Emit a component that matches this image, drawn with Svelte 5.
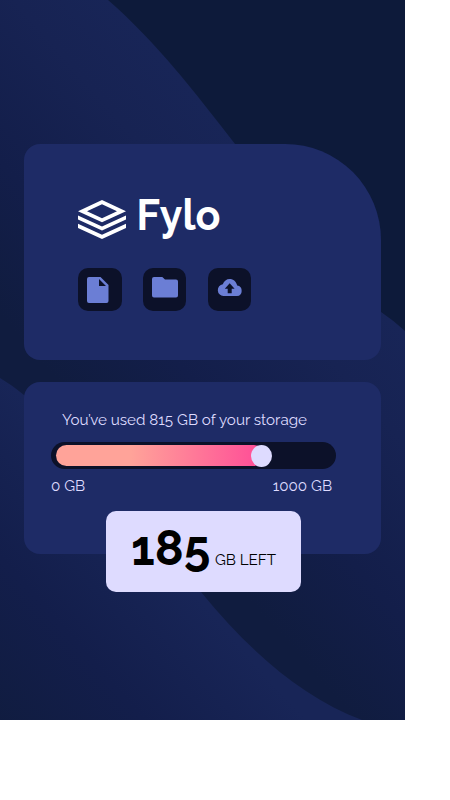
<script>
  const used = 815;
  const total = 1000;
  const left = total - used;
</script>

<main>
  <svg class="backdrop" viewBox="0 0 405 720" preserveAspectRatio="none" aria-hidden="true">
    <defs>
      <linearGradient id="upper" gradientUnits="userSpaceOnUse" x1="242" y1="148" x2="22" y2="341">
        <stop offset="0" stop-color="#182557" />
        <stop offset="0.25" stop-color="#172353" />
        <stop offset="0.65" stop-color="#131e4a" />
        <stop offset="1" stop-color="#101c3f" />
      </linearGradient>
      <linearGradient id="lower" gradientUnits="userSpaceOnUse" x1="205" y1="605" x2="22" y2="766">
        <stop offset="0" stop-color="#182557" />
        <stop offset="0.5" stop-color="#131e4b" />
        <stop offset="1" stop-color="#101c3f" />
      </linearGradient>
    </defs>
    <path fill="url(#upper)" d="M0 0H108C157 43 194 91 235 144C285 208 332 276 381 312Q393 320 405 331V720H0Z" />
    <path fill="url(#lower)" d="M0 378Q12 385 24 395C90 443 147 527 201 592C250 652 303 698 362 720H0Z" />
  </svg>

  <section class="card brand">
    <svg class="logo" viewBox="0 0 146 48" role="img" aria-label="Fylo">
      <g fill="#fff">
        <path fill-rule="evenodd" d="M24 4L48 15.2 24 26.3 0 15.2ZM24 8.2L9 15.2 24 22.3 39 15.2Z" />
        <path d="M0 19.5L24 30.4 48 19.5V23.6L24 34.6 0 23.6Z" />
        <path d="M0 27.8L24 38.8 48 27.8V32L24 43 0 32Z" />
        <text x="58.4" y="34.4" textLength="84" lengthAdjust="spacingAndGlyphs">Fylo</text>
      </g>
    </svg>
    <div class="tiles">
      <div class="tile">
        <svg viewBox="0 0 44 43"><path fill-rule="evenodd" d="M11 9H22.5L30.5 17V33Q30.5 35 28.5 35H11Q9 35 9 33V11Q9 9 11 9ZM21 11V18H28Z" /></svg>
      </div>
      <div class="tile">
        <svg viewBox="0 0 44 43"><path d="M11 9H19.3L22 11.5H33Q35 11.5 35 13.5V27.5Q35 29.5 33 29.5H11Q9 29.5 9 27.5V11Q9 9 11 9Z" /></svg>
      </div>
      <div class="tile">
        <svg viewBox="0 0 44 43"><path fill-rule="evenodd" d="M15.4 28.1A6 6 0 0 1 14.8 16.2C16.1 13 18.5 11 21.6 11C25.4 11 28.3 13.7 29.2 17.6A5.3 5.3 0 0 1 29 28.1ZM21.7 15.3L16.8 20.7H19.7V25.3H23.7V20.7H26.6Z" /></svg>
      </div>
    </div>
  </section>

  <section class="card storage">
    <p class="usage">You’ve used {used} GB of your storage</p>
    <div class="track">
      <div class="fill"></div>
      <div class="knob"></div>
    </div>
    <div class="scale">
      <span>0 GB</span>
      <span>{total} GB</span>
    </div>
    <div class="remaining">
      <strong>{left}</strong><span class="unit">GB LEFT</span>
    </div>
  </section>
</main>

<style>
  :global(body) { background: #fff; }
  main {
    position: relative;
    box-sizing: border-box;
    width: 405px;
    height: 720px;
    padding: 144px 24px 0;
    display: flex;
    flex-direction: column;
    gap: 22px;
    background: #0d1a3a;
    font-family: Raleway, Lato, sans-serif;
    color: #dedbff;
    overflow: hidden;
  }
  .backdrop { position: absolute; inset: 0; width: 405px; height: 720px; }
  .card {
    position: relative;
    box-sizing: border-box;
    background: #1e2b66;
    border-radius: 16px;
  }
  .brand { height: 216px; padding: 52px 54px 0; border-top-right-radius: 96px; }
  .logo { display: block; width: 146px; height: 48px; overflow: visible; }
  .logo text { font: 700 43px Raleway, Lato, sans-serif; }
  .tiles { display: flex; gap: 21.3px; margin-top: 24px; }
  .tile { width: 43.5px; height: 43px; border-radius: 10px; background: #0c1129; }
  .tile svg { display: block; width: 44px; height: 43px; fill: #6b7ed5; }
  .storage { height: 172px; padding: 28px 45px 0 27px; }
  .usage { margin: 0 0 0 11px; font-size: 15.2px; line-height: 20px; white-space: nowrap; }
  .track {
    box-sizing: border-box;
    display: flex;
    width: 285px;
    height: 27px;
    margin-top: 12px;
    padding: 3px 5px;
    border-radius: 14px;
    background: #0c1129;
  }
  .fill {
    width: 208px;
    height: 21px;
    border-radius: 11px;
    background: linear-gradient(90deg, #ffa399 36%, #ff4f97 97%);
  }
  .knob { width: 21px; height: 22px; margin-left: -13px; border-radius: 50%; background: #dedbff; }
  .scale { display: flex; justify-content: space-between; margin-top: 7px; padding-right: 4px; font-size: 15.2px; line-height: 20px; }
  .remaining {
    position: absolute;
    left: 82px;
    top: 129px;
    box-sizing: border-box;
    width: 195px;
    height: 81px;
    padding-left: 25px;
    display: flex;
    align-items: baseline;
    border-radius: 10px;
    background: #dedbff;
    color: #000;
    line-height: 75px;
    white-space: nowrap;
  }
  strong { font-size: 48px; font-weight: 700; }
  .unit { margin-left: 4.6px; font-size: 15.2px; }
</style>
